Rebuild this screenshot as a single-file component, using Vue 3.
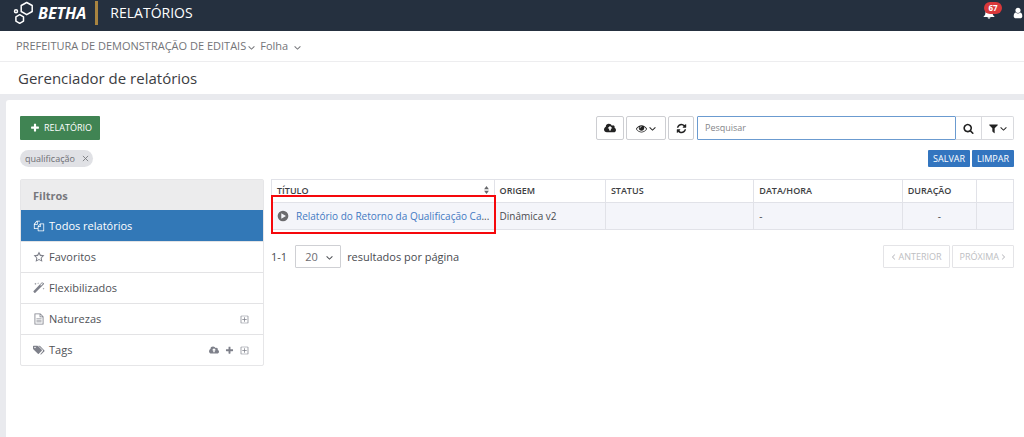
<script setup>
import { ref, onMounted } from 'vue'

const icons = {
  plus: 'M1600 736v192q0 40-28 68t-68 28h-416v416q0 40-28 68t-68 28h-192q-40 0-68-28t-28-68v-416h-416q-40 0-68-28t-28-68v-192q0-40 28-68t68-28h416v-416q0-40 28-68t68-28h192q40 0 68 28t28 68v416h416q40 0 68 28t28 68z',
  search: 'M1216 832q0-185-131.5-316.5t-316.5-131.5-316.5 131.5-131.5 316.5 131.5 316.5 316.5 131.5 316.5-131.5 131.5-316.5zm512 832q0 52-38 90t-90 38q-54 0-90-38l-343-342q-179 124-399 124-143 0-273.5-55.5t-225-150-150-225-55.5-273.5 55.5-273.5 150-225 225-150 273.5-55.5 273.5 55.5 225 150 150 225 55.5 273.5q0 220-124 399l343 343q37 37 37 90z',
  user: 'M1536 1399q0 109-62.5 187t-150.5 78h-854q-88 0-150.5-78t-62.5-187q0-85 8.5-160.5t31.5-152 58.5-131 94-89 134.5-34.5q131 128 313 128t313-128q76 0 134.5 34.5t94 89 58.5 131 31.5 152 8.5 160.5zm-256-887q0 159-112.5 271.5t-271.5 112.5-271.5-112.5-112.5-271.5 112.5-271.5 271.5-112.5 271.5 112.5 112.5 271.5z',
  refresh: 'M1639 1056q0 5-1 7-64 268-268 434.5t-478 166.5q-146 0-282.5-55t-243.5-157l-129 129q-19 19-45 19t-45-19-19-45v-448q0-26 19-45t45-19h448q26 0 45 19t19 45-19 45l-137 137q71 66 161 102t187 36q134 0 250-65t186-179q11-17 53-117 8-23 30-23h192q13 0 22.5 9.5t9.5 22.5zm25-800v448q0 26-19 45t-45 19h-448q-26 0-45-19t-19-45 19-45l138-138q-148-137-349-137-134 0-250 65t-186 179q-11 17-53 117-8 23-30 23h-199q-13 0-22.5-9.5t-9.5-22.5v-7q65-268 270-434.5t480-166.5q146 0 284 55.5t245 156.5l130-129q19-19 45-19t45 19 19 45z',
  filter: 'M1595 295q17 41-14 70l-493 493v742q0 42-39 59-13 5-25 5-27 0-45-19l-256-256q-19-19-19-45v-486l-493-493q-31-29-14-70 17-39 59-39h1280q42 0 59 39z',
  eye: 'M1664 960q-152-236-381-353 61 104 61 225 0 185-131.5 316.5t-316.5 131.5-316.5-131.5-131.5-316.5q0-121 61-225-229 117-381 353 133 205 333.5 326.5t434.5 121.5 434.5-121.5 333.5-326.5zm-720-384q0-20-14-34t-34-14q-125 0-214.5 89.5t-89.5 214.5q0 20 14 34t34 14 34-14 14-34q0-86 61-147t147-61q20 0 34-14t14-34zm848 384q0 34-20 69-140 230-376.5 368.5t-499.5 138.5-499.5-139-376.5-368q-20-35-20-69t20-69q140-229 376.5-368t499.5-139 499.5 139 376.5 368q20 35 20 69z',
  cloud: 'M420 1536Q240 1536 120 1416T0 1130Q0 990 75 880T270 720Q256 500 400 370T740 256Q890 256 1010 340T1180 555Q1250 500 1340 500Q1450 500 1520 575T1590 750Q1590 820 1560 875Q1660 910 1726 1000T1792 1200Q1792 1340 1694 1438T1460 1536ZM1216 900L896 580L576 900Q550 960 610 960H770V1280H1022V960H1180Q1240 960 1216 900Z',
  star: 'M896 60l250 506 560 82-404 396 96 558-502-264-502 264 96-558-404-396 560-82zM896 440l-150 304-335 48 243 237-58 334 300-158 300 158-58-334 243-237-335-48z',
  files: 'M640 128H1040V512H1600Q1664 512 1664 576V1600Q1664 1664 1600 1664H768Q704 1664 704 1600V1344H192Q128 1344 128 1280V610L560 128ZM600 270L270 620H600ZM700 240V650Q700 740 610 740H250V1230H704V940L1040 560V240ZM1080 680L850 930H1080ZM1180 630V950Q1180 1045 1090 1045H820V1550H1550V630Z',
  wand: 'M1190 560l290-290-115-115-290 290zM1645 270q0 40-30 68L350 1610q-28 30-68 30t-68-30L90 1486q-30-28-30-68t30-68L1297 88q28-30 68-30t68 30l182 114q30 28 30 68zM360 100l45 135 135 45-135 45-45 135-45-135-135-45 135-45zM760 50l30 100 100 30-100 30-30 100-30-100-100-30 100-30zM1580 850l40 120 120 40-120 40-40 120-40-120-120-40 120-40z',
  file: 'M256 64H1120L1568 512V1728H224V64ZM350 180V1612H1442V640H992V180ZM1104 210V528H1420ZM510 768H1282V870H510ZM510 1024H1282V1126H510ZM510 1280H1282V1382H510Z',
  tags: 'M90 250H620Q690 250 750 310L1310 870Q1370 930 1310 1000L860 1460Q800 1510 730 1460L80 810Q0 730 0 660V340Q0 250 90 250ZM300 410A110 110 0 1 0 300 630A110 110 0 1 0 300 410ZM810 250H930Q1000 250 1060 310L1710 960Q1770 1020 1710 1090L1250 1540Q1160 1610 1080 1540L1440 1120Q1560 990 1440 860Z',
  expand: 'M256 128H1536Q1664 128 1664 256V1536Q1664 1664 1536 1664H256Q128 1664 128 1536V256Q128 128 256 128ZM270 270V1522H1522V270ZM820 450H970V820H1340V970H970V1340H820V970H450V820H820Z',
  play: 'M896 96A800 800 0 1 0 896 1696A800 800 0 1 0 896 96ZM640 480L1340 896L640 1312Z',
  down: 'M250 500L896 1120L1542 500L1730 690L896 1500L62 690Z',
  left: 'M1260 250L614 896L1260 1542L1080 1722L254 896L1080 70Z',
  right: 'M532 250L1178 896L532 1542L712 1722L1538 896L712 70Z',
  bell: 'M896 0Q1010 0 1000 145Q1400 240 1400 700Q1400 1180 1700 1400V1480H92V1400Q392 1180 392 700Q392 240 792 145Q782 0 896 0ZM670 1540H1122Q1110 1760 896 1760T670 1540Z'
}

const filters = [
  { label: 'Todos relatórios', icon: 'files', active: true, actions: [] },
  { label: 'Favoritos', icon: 'star', actions: [] },
  { label: 'Flexibilizados', icon: 'wand', actions: [] },
  { label: 'Naturezas', icon: 'file', actions: [['expand', 'Expandir']] },
  { label: 'Tags', icon: 'tags', actions: [['cloud', 'Enviar'], ['plus', 'Adicionar'], ['expand', 'Expandir']] }
]

const query = ref('')
const pageSize = ref('20')
const searchBox = ref(null)
onMounted(() => searchBox.value.focus())
</script>

<template>
  <div class="page">
    <header class="topbar">
      <a class="brand" href="#" aria-label="Betha">
        <svg class="logo" viewBox="0 0 21 24" aria-hidden="true">
          <g fill="none" stroke="#fff" stroke-width="1.5" stroke-linejoin="round">
            <path d="M13.700 1.500l5.500 3v6l-5.500 3.200-5.500-3.200v-6z" />
            <path d="M6.700 13.700l3.800 2.200v4.200l-3.800 2.200-3.800-2.200v-4.200z" />
            <circle cx="3" cy="10.200" r="1.500" />
          </g>
        </svg>
        <span class="wordmark">BETHA</span>
      </a>
      <span class="divider"></span>
      <span class="product">RELATÓRIOS</span>
      <button class="bell" aria-label="Notificações">
        <svg class="i12" viewBox="0 0 1792 1792"><path :d="icons.bell" /></svg>
        <span class="count">67</span>
      </button>
      <button class="user" aria-label="Usuário">
        <svg class="i12" viewBox="0 0 1792 1792"><path :d="icons.user" /></svg>
      </button>
    </header>

    <nav class="crumbs">
      <button>PREFEITURA DE DEMONSTRAÇÃO DE EDITAIS <svg class="i7" viewBox="0 0 1792 1792"><path :d="icons.down" /></svg></button>
      <button>Folha <svg class="i7" viewBox="0 0 1792 1792"><path :d="icons.down" /></svg></button>
    </nav>
    <h1>Gerenciador de relatórios</h1>

    <main>
      <section class="panel">
        <div class="toolbar">
          <button class="new"><svg class="i10" viewBox="0 0 1792 1792"><path :d="icons.plus" /></svg>RELATÓRIO</button>
          <div class="tools">
            <button class="tool" aria-label="Enviar"><svg class="i12" viewBox="0 0 1792 1792"><path fill-rule="evenodd" :d="icons.cloud" /></svg></button>
            <button class="tool wide" aria-label="Exibição">
              <svg class="i11" viewBox="0 0 1792 1792"><path :d="icons.eye" /></svg>
              <svg class="i7" viewBox="0 0 1792 1792"><path :d="icons.down" /></svg>
            </button>
            <button class="tool" aria-label="Atualizar"><svg class="i11" viewBox="0 0 1792 1792"><path :d="icons.refresh" /></svg></button>
            <div class="search">
              <input ref="searchBox" v-model="query" type="text" placeholder="Pesquisar" aria-label="Pesquisar" />
              <button class="find" aria-label="Buscar"><svg class="i11" viewBox="0 0 1792 1792"><path :d="icons.search" /></svg></button>
              <button class="find last" aria-label="Filtrar">
                <svg class="i11" viewBox="0 0 1792 1792"><path :d="icons.filter" /></svg>
                <svg class="i7" viewBox="0 0 1792 1792"><path :d="icons.down" /></svg>
              </button>
            </div>
          </div>
        </div>

        <div class="applied">
          <span class="chip">qualificação
            <button aria-label="Remover qualificação">
              <svg viewBox="0 0 8 8"><path d="M1 1l6 6M7 1L1 7" /></svg>
            </button>
          </span>
          <div class="links">
            <button>SALVAR</button>
            <button>LIMPAR</button>
          </div>
        </div>

        <div class="content">
          <aside>
            <h2>Filtros</h2>
            <ul>
              <li v-for="f in filters" :key="f.label" :class="{ active: f.active }">
                <a href="#"><svg class="i12" viewBox="0 0 1792 1792"><path fill-rule="evenodd" :d="icons[f.icon]" /></svg>{{ f.label }}</a>
                <button v-for="a in f.actions" :key="a[0]" :aria-label="a[1] + ' ' + f.label">
                  <svg :class="a[0] === 'cloud' ? 'i10' : 'i9'" viewBox="0 0 1792 1792"><path fill-rule="evenodd" :d="icons[a[0]]" /></svg>
                </button>
              </li>
            </ul>
          </aside>

          <div class="results">
            <table>
              <colgroup>
                <col class="c-title" /><col class="c-origin" /><col class="c-status" /><col class="c-date" /><col class="c-time" /><col class="c-menu" />
              </colgroup>
              <thead>
                <tr>
                  <th scope="col"><span class="sortable">TÍTULO
                    <svg class="sort" viewBox="0 0 6 10"><path d="M0 4L3 0l3 4zM0 6h6L3 10z" /></svg></span></th>
                  <th scope="col">ORIGEM</th>
                  <th scope="col">STATUS</th>
                  <th scope="col">DATA/HORA</th>
                  <th scope="col">DURAÇÃO</th>
                  <td></td>
                </tr>
              </thead>
              <tbody>
                <tr>
                  <td class="marked">
                    <div class="title-cell">
                      <button aria-label="Executar"><svg class="i12" viewBox="0 0 1792 1792"><path fill-rule="evenodd" :d="icons.play" /></svg></button>
                      <span class="name"><a href="#">Relatório do Retorno da Qualificação Ca</a>...</span>
                    </div>
                    <span class="highlight"></span>
                  </td>
                  <td>Dinâmica v2</td>
                  <td></td>
                  <td>-</td>
                  <td class="center">-</td>
                  <td></td>
                </tr>
              </tbody>
            </table>

            <div class="pager">
              <span>1-1</span>
              <span class="select">
                <select id="size" v-model="pageSize">
                  <option>20</option>
                  <option>50</option>
                </select>
                <svg class="i7" viewBox="0 0 1792 1792"><path :d="icons.down" /></svg>
              </span>
              <label for="size">resultados por página</label>
              <div class="steps">
                <button disabled><svg class="i6" viewBox="0 0 1792 1792"><path :d="icons.left" /></svg>ANTERIOR</button>
                <button disabled>PRÓXIMA<svg class="i6" viewBox="0 0 1792 1792"><path :d="icons.right" /></svg></button>
              </div>
            </div>
          </div>
        </div>
      </section>
    </main>
  </div>
</template>

<style>
body { background: #fff; }
</style>

<style scoped>
* { box-sizing: border-box; }
.page { min-height: 100vh; display: flex; flex-direction: column; font: 11px/16px "Open Sans", "Noto Sans", sans-serif; color: #494b50; }
button { font: inherit; color: inherit; background: none; border: 0; padding: 0; margin: 0; display: inline-flex; align-items: center; }
a { color: inherit; text-decoration: none; }
svg { fill: currentColor; flex: none; display: block; }
.i6 { width: 6px; height: 6px; }
.i7 { width: 7px; height: 7px; }
.i9 { width: 9px; height: 9px; }
.i10 { width: 10px; height: 10px; }
.i11 { width: 11px; height: 11px; }
.i12 { width: 12px; height: 12px; }

.topbar { height: 31px; background: #25303f; color: #fff; display: flex; align-items: center; padding: 0 0 5px 13px; }
.brand { display: flex; align-items: center; gap: 4px; }
.logo { width: 21px; height: 24px; }
.wordmark { font: italic 700 16px/20px "Open Sans", sans-serif; }
.divider { width: 3px; height: 24px; background: #a98440; margin: 0 12px 0 9px; }
.product { font-size: 14px; line-height: 20px; flex: 1; }
.bell { position: relative; margin-right: 17px; }
.count { position: absolute; left: 1px; top: -5px; width: 18px; height: 12px; border-radius: 6px; background: #d9383a; font-size: 8px; font-weight: 700; line-height: 12px; text-align: center; }

.crumbs { height: 31px; border-bottom: 1px solid #ededef; display: flex; gap: 5px; padding-left: 16px; color: #737478; }
.crumbs button { gap: 2px; }
.crumbs button + button { gap: 6px; }
.crumbs svg { margin-top: 3px; }
h1 { margin: 0; padding: 0 18px; font-size: 15px; font-weight: 400; line-height: 32px; color: #3c3d42; }
main { flex: 1; background: #e9eaee; padding: 6px 0 0 6px; display: flex; }
.panel { flex: 1; min-width: 0; background: #fff; border-radius: 3px 0 0; padding: 16px 10px 16px 14px; }

.toolbar { display: flex; justify-content: space-between; }
.new { height: 24px; background: #408453; color: #fff; padding: 0 8px 0 10px; gap: 4px; border-radius: 1px; font-size: 9px; }
.tools { display: flex; color: #222; }
.tool { height: 24px; width: 28px; justify-content: center; border: 1px solid #cdced2; border-radius: 2px; margin-right: 2px; }
.tool:nth-child(3) { width: 26px; margin-right: 3px; }
.tool.wide { width: 40px; gap: 2px; }
.search { display: flex; height: 24px; }
.search input { width: 259px; border: 1px solid #6b9bd0; border-radius: 1px; padding: 0 7px; font: inherit; font-size: 9px; outline: none; background: #fff; color: #555; }
.search input::placeholder { color: #85868a; }
.find { width: 26px; justify-content: center; border: 1px solid #d9dade; border-left: 0; gap: 1px; }
.find.last { width: 32px; border-radius: 0 2px 2px 0; }

.applied { display: flex; justify-content: space-between; align-items: center; margin-top: 10px; height: 17px; }
.chip { display: inline-flex; align-items: center; gap: 7px; height: 17px; border-radius: 9px; background: #e0e1e5; padding: 0 4px 0 5px; font-size: 9px; color: #6d6e73; }
.chip svg { width: 7px; height: 7px; stroke: #77787d; fill: none; }
.links { display: flex; gap: 2px; }
.links button { height: 17px; padding: 0 5px; background: #3375bf; color: #fff; font-size: 9px; border-radius: 1px; }

.content { display: flex; align-items: flex-start; gap: 7px; margin-top: 12px; }
aside { width: 244px; border: 1px solid #e6e6e8; border-radius: 2px; }
h2 { margin: 0; height: 30px; padding-left: 12px; background: #ececed; font-size: 11px; line-height: 31px; color: #77787c; font-weight: 700; }
ul { list-style: none; margin: 0; padding: 0; }
li { display: flex; align-items: center; height: 31px; padding: 0 14px 0 12px; gap: 6px; border-top: 1px solid #e3e3e5; color: #7e808a; }
li a { flex: 1; display: flex; align-items: center; gap: 4px; color: #505257; }
li a svg { color: #7e808a; }
li.active { background: #3278b7; border-color: #3278b7; }
li.active a, li.active svg { color: #fff; }

.results { flex: 1; min-width: 0; }
table { width: 100%; table-layout: fixed; border-collapse: collapse; font-size: 10px; }
.c-title { width: 30%; }
.c-origin { width: 15%; }
.c-status { width: 20%; }
.c-date { width: 20%; }
.c-time { width: 10%; }
.c-menu { width: 5%; }
th, td { border: 1px solid #e1e2e8; padding: 0 5px; text-align: left; }
th { height: 23px; font-size: 9px; font-weight: 600; color: #3d3e42; }
tbody td { height: 27px; background: #f4f5fa; }
tbody td.center { text-align: center; }
.sortable { display: flex; justify-content: space-between; align-items: center; }
.sort { width: 5px; height: 8px; color: #66676b; margin-top: -3px; }
.marked { position: relative; }
.highlight { position: absolute; inset: -8px -2px -5px -1px; border: 2px solid #f5080c; pointer-events: none; }
.title-cell { display: flex; align-items: center; gap: 7px; }
.title-cell button { color: #6b6b6e; }
.name { white-space: nowrap; }
.name a { color: #4379c2; }

.pager { display: flex; align-items: center; margin-top: 15px; }
.select { position: relative; margin: 0 6px 0 8px; }
.select select { appearance: none; display: block; width: 46px; height: 23px; border: 1px solid #cfd0d4; border-radius: 1px; background: #fff; padding: 0 9px; font: inherit; color: #6c6d72; }
.select svg { position: absolute; right: 8px; top: 9px; pointer-events: none; }
.steps { margin-left: auto; display: flex; gap: 2px; }
.steps button { height: 23px; border: 1px solid #e4e4e7; border-radius: 1px; padding: 0 7px; gap: 1px; font-size: 9px; color: #bdbec2; }
</style>
